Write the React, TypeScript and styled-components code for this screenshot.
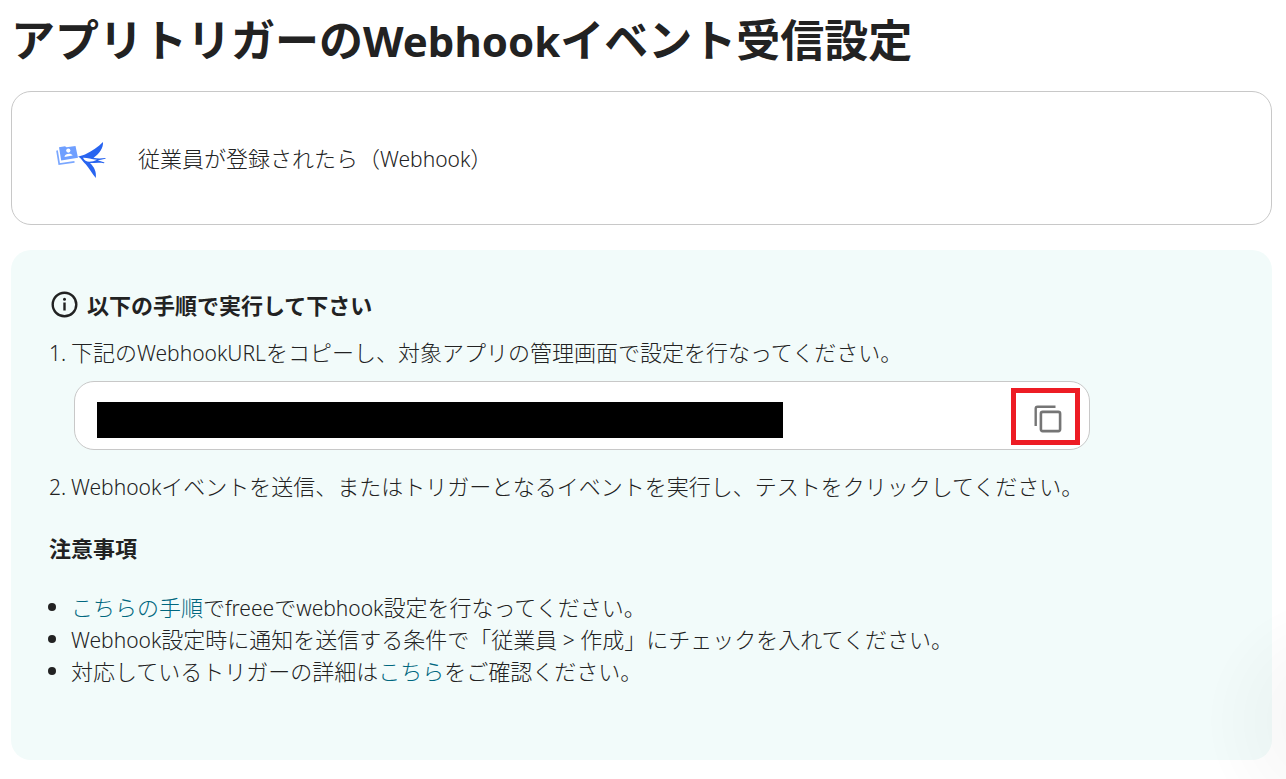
import React from "react";
import styled, { createGlobalStyle } from "styled-components";

const GlobalStyle = createGlobalStyle`
  *, *::before, *::after { box-sizing: border-box; }
  body {
    margin: 0;
    background: #fff;
    color: #222;
    font-family: "Noto Sans CJK JP", "Noto Sans", sans-serif;
    font-size: 22px;
    font-weight: 300;
    line-height: 32px;
  }
`;

const Page = styled.main`
  padding: 6px 14px 19px 11px;
`;

const Latin = styled.span<{ $title?: boolean }>`
  font-family: "Noto Sans", sans-serif;
  font-size: ${({ $title }) => ($title ? 42 : 21)}px;
  line-height: 1;
`;

const Title = styled.h1`
  margin: 0 0 21px;
  font-size: 44px;
  line-height: 64px;
  font-weight: 700;
`;

const Card = styled.section`
  display: flex;
  align-items: center;
  gap: 30px;
  height: 134px;
  padding: 0 44px 2px;
  border: 1px solid #c8c8c8;
  border-radius: 20px;
  background: #fff;
`;

const Panel = styled.section`
  margin-top: 25px;
  padding: 38px 38px 74px;
  border-radius: 20px;
  background: #f2fbfa;
`;

const Heading = styled.h2`
  display: flex;
  align-items: center;
  gap: 8px;
  margin: 0 0 15px;
  font-size: 22px;
  line-height: 32px;
  font-weight: 700;
`;

const Steps = styled.ol`
  margin: 0;
  padding: 0;
  list-style: none;
`;

const Step = styled.li`
  display: grid;
  grid-template-columns: 22px 1fr;
`;

const UrlBox = styled.div`
  grid-column: 2;
  display: flex;
  align-items: center;
  justify-content: space-between;
  max-width: 1016px;
  height: 69px;
  margin: 14px 0 19px 3px;
  padding: 0 9px 0 22px;
  border: 1px solid #c8c8c8;
  border-radius: 20px;
  background: #fff;
`;

const UrlInput = styled.input`
  flex: 0 1 686px;
  min-width: 0;
  height: 36px;
  margin: 8px 0 0;
  padding: 0;
  border: 0;
  background: #000;
  color: #000;
`;

const CopyButton = styled.button`
  display: flex;
  align-items: center;
  justify-content: center;
  width: 69px;
  height: 57px;
  margin-top: 2px;
  padding: 4px 0 0 4px;
  border: 5px solid #ed1c24;
  background: #fff;
  cursor: pointer;
`;

const SubHeading = styled.h3`
  margin: 30px 0 27px;
  font-size: 22px;
  line-height: 32px;
  font-weight: 700;
`;

const Notes = styled.ul`
  margin: 0;
  padding: 0 0 0 22px;
  list-style: none;
`;

const Note = styled.li`
  display: flex;
  align-items: center;
  margin-left: -23px;

  &::before {
    content: "";
    flex: none;
    width: 8px;
    height: 8px;
    margin: 2px 15px 0 0;
    border-radius: 50%;
    background: #222;
  }
`;

const Link = styled.a`
  color: #00677f;
  text-decoration: none;
`;

const CornerShade = styled.div`
  position: fixed;
  right: 0;
  bottom: 0;
  width: 80px;
  height: 180px;
  pointer-events: none;
  background: radial-gradient(circle at 124px 122px, rgba(0, 0, 0, 0.04) 0, rgba(0, 0, 0, 0.02) 70px, rgba(0, 0, 0, 0) 124px);
`;

const Logo = () => (
  <svg width="52" height="40" viewBox="0 -4 52 40" overflow="visible" aria-hidden="true">
    <path d="M1 9.5L3.2 23L18.5 20.8" fill="none" stroke="#7aa7ff" strokeWidth="1.7" />
    <path d="M3 6.3L9 5.3L10.5 6.3L19.5 5L22 16.7L5.2 19.4Z" fill="#6f9fff" />
    <circle cx="12.3" cy="9.6" r="2.1" fill="#fff" />
    <path d="M8.5 15.9C8.6 12.5 15.4 11.4 16.6 14.6Z" fill="#fff" />
    <path d="M22 15.8C25 14.2 27.2 14.4 29 13.4C36 10.4 42.5 5.5 47 1C47.4 6.5 44 12.4 37.5 16.7C41 17.6 45 17.5 49.5 17L49.5 17.8C46 18.6 43.5 18.9 41.8 19.2L48.5 21.6L48 22.3C43 21.4 39 22.1 34 22.1C38.3 26 40.6 31 39.8 37C36 32.5 33 27 29.5 23C26.5 20.6 25.5 17 22 15.8Z" fill="#2864f0" />
    <path d="M27 16.8C31 16.6 35 18.4 41 18.8C36 21.2 29 22.2 27 16.8Z" fill="#fff" />
  </svg>
);

const InfoIcon = () => (
  <svg width="30" height="30" viewBox="0 0 30 30" aria-hidden="true">
    <circle cx="15.5" cy="15.5" r="11.8" fill="none" stroke="#222" strokeWidth="2.4" />
    <circle cx="15.5" cy="10.3" r="1.5" fill="#222" />
    <path d="M15.5 13.5V21.5" stroke="#222" strokeWidth="2.4" />
  </svg>
);

const CopyIcon = () => (
  <svg width="28" height="28" viewBox="0 0 28 28" aria-hidden="true">
    <path d="M1.7 21V3.5Q1.7 1.7 3.5 1.7H21.5" fill="none" stroke="#757575" strokeWidth="2.4" />
    <rect x="6.9" y="6.9" width="19.2" height="19.2" rx="1.8" fill="none" stroke="#757575" strokeWidth="2.6" />
  </svg>
);

export default function App() {
  return (
    <>
      <GlobalStyle />
      <Page lang="ja">
        <Title>
          アプリトリガーの<Latin $title>Webhook</Latin>イベント受信設定
        </Title>
        <Card>
          <Logo />
          <span>
            従業員が登録されたら（<Latin>Webhook</Latin>）
          </span>
        </Card>
        <Panel>
          <Heading>
            <InfoIcon />
            以下の手順で実行して下さい
          </Heading>
          <Steps>
            <Step>
              <span>
                <Latin>1.</Latin>
              </span>
              <span>
                下記の<Latin>WebhookURL</Latin>をコピーし、対象アプリの管理画面で設定を行なってください。
              </span>
              <UrlBox>
                <UrlInput type="text" readOnly aria-label="WebhookURL" />
                <CopyButton type="button" aria-label="コピー">
                  <CopyIcon />
                </CopyButton>
              </UrlBox>
            </Step>
            <Step>
              <span>
                <Latin>2.</Latin>
              </span>
              <span>
                <Latin>Webhook</Latin>イベントを送信、またはトリガーとなるイベントを実行し、テストをクリックしてください。
              </span>
            </Step>
          </Steps>
          <SubHeading>注意事項</SubHeading>
          <Notes>
            <Note>
              <span>
                <Link href="#procedure">こちらの手順</Link>で<Latin>freee</Latin>で<Latin>webhook</Latin>設定を行なってください。
              </span>
            </Note>
            <Note>
              <span>
                <Latin>Webhook</Latin>設定時に通知を送信する条件で「従業員<Latin> &gt; </Latin>作成」にチェックを入れてください。
              </span>
            </Note>
            <Note>
              <span>
                対応しているトリガーの詳細は<Link href="#triggers">こちら</Link>をご確認ください。
              </span>
            </Note>
          </Notes>
        </Panel>
      </Page>
      <CornerShade />
    </>
  );
}
